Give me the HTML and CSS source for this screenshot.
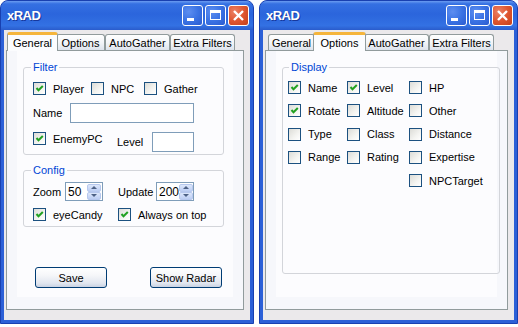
FILE: index.html
```html
<!DOCTYPE html>
<html lang="en">
<head>
  <meta charset="UTF-8" />
  <title>xRAD</title>
  <link rel="stylesheet" href="styles.css">
</head>
<body>
  <div class="xrad-desktop">

    <!-- General tab window -->
    <div class="xrad-window">
      <div class="xrad-titlebar">
        <span class="xrad-title">xRAD</span>
        <div class="xrad-controls">
          <span class="xrad-ctl"><svg width="19" height="19" viewBox="0 0 19 19"><rect x="4" y="12" width="7" height="3" fill="#fff"/></svg></span>
          <span class="xrad-ctl"><svg width="19" height="19" viewBox="0 0 19 19"><rect x="4.5" y="4.5" width="10" height="9" fill="none" stroke="#fff"/><rect x="4" y="4" width="11" height="3" fill="#fff"/></svg></span>
          <span class="xrad-ctl close"><svg width="19" height="19" viewBox="0 0 19 19"><path d="M5 5 L14 14 M14 5 L5 14" stroke="#fff" stroke-width="2.4"/></svg></span>
        </div>
      </div>
      <div class="xrad-client">
        <div class="xrad-tabstrip">
          <span class="xrad-tab tab-general active">General</span>
          <span class="xrad-tab tab-options">Options</span>
          <span class="xrad-tab tab-gather">AutoGather</span>
          <span class="xrad-tab tab-extra">Extra Filters</span>
        </div>
        <div class="xrad-panel">
          <div class="xrad-page">

            <fieldset class="xrad-group group-filter">
              <legend>Filter</legend>
              <div class="xrad-row">
                <label class="xrad-check w-player"><span class="xrad-box"><svg width="11" height="11" viewBox="0 0 11 11"><path d="M2.5 5 L4.5 7.3 L8.8 3" fill="none" stroke="#21a121" stroke-width="2"/></svg></span>Player</label>
                <label class="xrad-check w-npc"><span class="xrad-box"></span>NPC</label>
                <label class="xrad-check"><span class="xrad-box"></span>Gather</label>
              </div>
              <div class="xrad-row row-name">
                <span class="xrad-label w-name">Name</span>
                <span class="xrad-input input-name"></span>
              </div>
              <div class="xrad-row row-enemy">
                <label class="xrad-check w-enemy top"><span class="xrad-box"><svg width="11" height="11" viewBox="0 0 11 11"><path d="M2.5 5 L4.5 7.3 L8.8 3" fill="none" stroke="#21a121" stroke-width="2"/></svg></span>EnemyPC</label>
                <span class="xrad-label w-level">Level</span>
                <span class="xrad-input input-level"></span>
              </div>
            </fieldset>

            <fieldset class="xrad-group group-config">
              <legend>Config</legend>
              <div class="xrad-row row-spin">
                <span class="xrad-label w-zoom">Zoom</span>
                <span class="xrad-input xrad-spin"><span class="xrad-spin-val">50</span><span class="xrad-spin-btns"><span class="xrad-spin-btn up"></span><span class="xrad-spin-btn down"></span></span></span>
                <span class="xrad-label w-update">Update</span>
                <span class="xrad-input xrad-spin"><span class="xrad-spin-val">200</span><span class="xrad-spin-btns"><span class="xrad-spin-btn up"></span><span class="xrad-spin-btn down"></span></span></span>
              </div>
              <div class="xrad-row row-flags">
                <label class="xrad-check w-eye"><span class="xrad-box"><svg width="11" height="11" viewBox="0 0 11 11"><path d="M2.5 5 L4.5 7.3 L8.8 3" fill="none" stroke="#21a121" stroke-width="2"/></svg></span>eyeCandy</label>
                <label class="xrad-check"><span class="xrad-box"><svg width="11" height="11" viewBox="0 0 11 11"><path d="M2.5 5 L4.5 7.3 L8.8 3" fill="none" stroke="#21a121" stroke-width="2"/></svg></span>Always on top</label>
              </div>
            </fieldset>

            <div class="xrad-actions">
              <button class="xrad-btn">Save</button>
              <button class="xrad-btn">Show Radar</button>
            </div>

          </div>
        </div>
      </div>
    </div>

    <!-- Options tab window -->
    <div class="xrad-window wide">
      <div class="xrad-titlebar">
        <span class="xrad-title">xRAD</span>
        <div class="xrad-controls">
          <span class="xrad-ctl"><svg width="19" height="19" viewBox="0 0 19 19"><rect x="4" y="12" width="7" height="3" fill="#fff"/></svg></span>
          <span class="xrad-ctl"><svg width="19" height="19" viewBox="0 0 19 19"><rect x="4.5" y="4.5" width="10" height="9" fill="none" stroke="#fff"/><rect x="4" y="4" width="11" height="3" fill="#fff"/></svg></span>
          <span class="xrad-ctl close"><svg width="19" height="19" viewBox="0 0 19 19"><path d="M5 5 L14 14 M14 5 L5 14" stroke="#fff" stroke-width="2.4"/></svg></span>
        </div>
      </div>
      <div class="xrad-client">
        <div class="xrad-tabstrip">
          <span class="xrad-tab tab-general">General</span>
          <span class="xrad-tab tab-options active">Options</span>
          <span class="xrad-tab tab-gather">AutoGather</span>
          <span class="xrad-tab tab-extra">Extra Filters</span>
        </div>
        <div class="xrad-panel">
          <div class="xrad-page">

            <fieldset class="xrad-group group-display">
              <legend>Display</legend>
              <div class="xrad-grid">
                <label class="xrad-check"><span class="xrad-box"><svg width="11" height="11" viewBox="0 0 11 11"><path d="M2.5 5 L4.5 7.3 L8.8 3" fill="none" stroke="#21a121" stroke-width="2"/></svg></span>Name</label>
                <label class="xrad-check"><span class="xrad-box"><svg width="11" height="11" viewBox="0 0 11 11"><path d="M2.5 5 L4.5 7.3 L8.8 3" fill="none" stroke="#21a121" stroke-width="2"/></svg></span>Level</label>
                <label class="xrad-check"><span class="xrad-box"></span>HP</label>

                <label class="xrad-check"><span class="xrad-box"><svg width="11" height="11" viewBox="0 0 11 11"><path d="M2.5 5 L4.5 7.3 L8.8 3" fill="none" stroke="#21a121" stroke-width="2"/></svg></span>Rotate</label>
                <label class="xrad-check"><span class="xrad-box"></span>Altitude</label>
                <label class="xrad-check"><span class="xrad-box"></span>Other</label>

                <label class="xrad-check"><span class="xrad-box"></span>Type</label>
                <label class="xrad-check"><span class="xrad-box"></span>Class</label>
                <label class="xrad-check"><span class="xrad-box"></span>Distance</label>

                <label class="xrad-check"><span class="xrad-box"></span>Range</label>
                <label class="xrad-check"><span class="xrad-box"></span>Rating</label>
                <label class="xrad-check"><span class="xrad-box"></span>Expertise</label>

                <label class="xrad-check col-3"><span class="xrad-box"></span>NPCTarget</label>
              </div>
            </fieldset>

          </div>
        </div>
      </div>
    </div>

  </div>
</body>
</html>
```

FILE: styles.css
```css
* {
  box-sizing: border-box;
}

body {
  margin: 0;
  background: #fff;
  font-family: "Liberation Sans", Arial, sans-serif;
  font-size: 11px;
  color: #000;
}

.xrad-desktop {
  display: flex;
  gap: 5px;
}

/* Window frame */
.xrad-window {
  width: 254px;
  height: 324px;
  display: flex;
  flex-direction: column;
  padding: 0 3px 3px;
  background: #2c60d7;
  border: 1px solid #1940b0;
  border-radius: 8px 8px 0 0;
}

.xrad-window.wide {
  width: 259px;
}

.xrad-titlebar {
  height: 29px;
  margin: 0 -3px;
  display: flex;
  align-items: center;
  padding: 0 4px 0 6px;
  border-radius: 7px 7px 0 0;
  background: linear-gradient(to bottom, #6b9cf1 0%, #3570e2 10%, #2b65dc 45%, #3371e3 85%, #2a5ccc 100%);
}

.xrad-title {
  color: #fff;
  font-weight: bold;
  font-size: 13px;
  letter-spacing: -0.5px;
  text-shadow: 1px 1px 0 #17389c;
}

.xrad-controls {
  margin-left: auto;
  display: flex;
  gap: 2px;
}

.xrad-ctl {
  width: 21px;
  height: 21px;
  border: 1px solid #fff;
  border-radius: 3px;
  background: radial-gradient(circle at 30% 30%, #5d8ef0 0%, #3b73e4 50%, #2a5bd0 100%);
  display: flex;
}

.xrad-ctl.close {
  background: radial-gradient(circle at 30% 30%, #ec8266 0%, #df5630 50%, #c4401a 100%);
}

/* Client area */
.xrad-client {
  flex: 1;
  background: #ebe9eb;
  padding: 2px 6px 0 2px;
}

.xrad-tabstrip {
  display: flex;
  align-items: flex-end;
  height: 18px;
  padding-left: 3px;
  position: relative;
  z-index: 1;
}

.xrad-tab {
  height: 16px;
  display: flex;
  align-items: center;
  justify-content: center;
  border: 1px solid #919b9c;
  border-bottom: 0;
  border-radius: 3px 3px 0 0;
  background: linear-gradient(to bottom, #ffffff 0%, #f3f5f8 50%, #dde3ec 100%);
}

.tab-general { width: 47px; }
.tab-options { width: 49px; }
.tab-gather { width: 65px; }
.tab-extra { width: 65px; }

.xrad-tab.active {
  height: 19px;
  margin: 0 -2px -1px;
  padding-bottom: 1px;
  border-top: 3px solid #f5b53c;
  background: #fbfcfe;
  position: relative;
}

.tab-general.active { width: 51px; }
.tab-options.active { width: 53px; }

.xrad-panel {
  height: 260px;
  border: 1px solid #919b9c;
  background: #f6f7fb;
}

.xrad-page {
  height: 246px;
  margin: 0 10px;
  padding: 10px 9px 0 6px;
  background: #fcfcfe;
}

/* Group boxes */
.xrad-group {
  margin: 0;
  padding: 0 8px 0 9px;
  border: 1px solid #d3d5da;
  border-radius: 3px;
  min-width: 0;
}

.xrad-group legend {
  color: #0046d5;
  line-height: 13px;
  padding: 0 2px;
  margin-left: -2px;
}

.group-filter {
  padding-top: 8px;
  padding-bottom: 2px;
}

.group-config {
  margin-top: 9px;
  padding-top: 5px;
  padding-bottom: 5px;
}

.group-display {
  width: 218px;
  height: 213px;
  padding: 7px 0 0 5px;
}

.group-display legend {
  margin-left: 1px;
}

.xrad-row {
  display: flex;
  align-items: center;
}

.row-name {
  margin-top: 8px;
}

.row-enemy {
  margin-top: 9px;
}

.row-flags {
  margin-top: 7px;
}

.xrad-label {
  white-space: nowrap;
}

.xrad-check {
  display: flex;
  align-items: center;
  gap: 7px;
  white-space: nowrap;
}

.xrad-check.top {
  align-self: flex-start;
}

.w-player { width: 58px; }
.w-npc { width: 53px; }
.w-name { width: 37px; }
.w-enemy { width: 84px; }
.w-level { width: 35px; }
.w-zoom { width: 32px; }
.w-update { width: 38px; margin-left: 15px; }
.w-eye { width: 85px; }

.xrad-box {
  width: 13px;
  height: 13px;
  flex: none;
  border: 1px solid #1c5180;
  background: linear-gradient(135deg, #dcdcd7 0%, #f4f4f1 60%, #ffffff 100%);
  display: flex;
}

.xrad-input {
  height: 20px;
  border: 1px solid #7f9db9;
  background: #fff;
}

.input-name { width: 124px; }
.input-level { width: 42px; }

/* Spin boxes */
.xrad-spin {
  width: 38px;
  height: 19px;
  display: flex;
  align-items: center;
  padding: 0 1px 0 2px;
}

.xrad-spin-val {
  flex: 1;
  font-size: 12px;
}

.xrad-spin-btns {
  display: flex;
  flex-direction: column;
  height: 16px;
}

.xrad-spin-btn {
  width: 14px;
  height: 8px;
  border: 1px solid #b7c8ee;
  border-radius: 2px;
  background: linear-gradient(to bottom, #dde7fb, #bccdf3);
  display: flex;
  align-items: center;
  justify-content: center;
}

.xrad-spin-btn::after {
  content: "";
  border-left: 3px solid transparent;
  border-right: 3px solid transparent;
}

.xrad-spin-btn.up::after {
  border-bottom: 3px solid #4d6185;
}

.xrad-spin-btn.down::after {
  border-top: 3px solid #4d6185;
}

/* Buttons */
.xrad-actions {
  display: flex;
  gap: 43px;
  margin-top: 40px;
  padding-left: 12px;
}

.xrad-btn {
  width: 72px;
  height: 21px;
  padding: 0;
  font: inherit;
  color: #000;
  border: 1px solid #003c74;
  border-radius: 3px;
  background: linear-gradient(to bottom, #ffffff 0%, #f5f6f9 40%, #e1e6ef 80%, #c9d2e2 100%);
}

/* Display grid */
.xrad-grid {
  display: grid;
  grid-template-columns: 59px 62px auto;
  grid-auto-rows: 13px;
  row-gap: 10.3px;
}

.col-3 {
  grid-column: 3;
}
```
